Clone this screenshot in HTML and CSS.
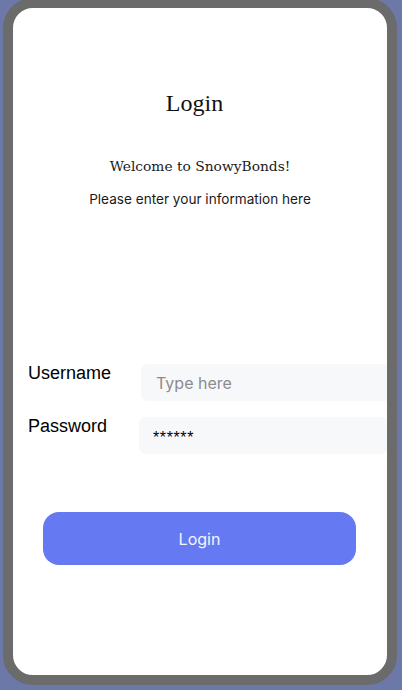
FILE: index.html
```html
<!DOCTYPE html>
<html>
<head>
<meta charset="utf-8">
<link rel="stylesheet" href="styles.css">
</head>
<body>
<div class="frame">
  <div class="screen">
    <header class="intro">
      <h1 class="title">Login</h1>
      <p class="welcome">Welcome to SnowyBonds!</p>
      <p class="hint">Please enter your information here</p>
    </header>
    <form class="form">
      <div class="row">
        <label class="label">Username</label>
        <div class="field field-user"><span class="placeholder">Type here</span></div>
      </div>
      <div class="row">
        <label class="label">Password</label>
        <div class="field field-pass"><span class="dots">******</span></div>
      </div>
      <button type="button" class="btn">Login</button>
    </form>
  </div>
</div>
</body>
</html>
```

FILE: styles.css
```css
html, body {
  margin: 0;
  padding: 0;
  height: 100%;
  background: #6c79a8;
  overflow: hidden;
}
.frame {
  margin: -2px 5px 0 3px;
  border: 10px solid #6b6b6b;
  border-radius: 30px;
  height: 667px;
  background: #ffffff;
  overflow: hidden;
}
.screen {
  height: 100%;
  display: flex;
  flex-direction: column;
}
.intro {
  display: flex;
  flex-direction: column;
  align-items: center;
  padding-top: 79px;
}
.title {
  margin: 0 0 0 -11px;
  font-family: "Liberation Serif", serif;
  font-weight: 400;
  font-size: 24px;
  line-height: 32px;
  color: #111;
}
.welcome {
  margin: 37px 0 0;
  font-family: "DejaVu Serif", serif;
  font-size: 13.8px;
  line-height: 20px;
  color: #1a1a1a;
}
.hint {
  margin: 13px 0 0;
  font-family: Inter, "Noto Sans", sans-serif;
  font-size: 13.6px;
  line-height: 20px;
  color: #1a1a1a;
}
.form {
  margin-top: 155px;
  display: flex;
  flex-direction: column;
}
.row {
  display: flex;
  align-items: flex-start;
  padding-left: 15px;
  margin-bottom: 16px;
}
.label {
  font-family: "Liberation Sans", Arial, sans-serif;
  font-size: 18px;
  line-height: 22px;
  color: #000;
  margin-top: -2px;
}
.field {
  flex: none;
  height: 37px;
  background: #f7f8fa;
  border-radius: 7px;
  display: flex;
  align-items: center;
  box-sizing: border-box;
}
.field-user {
  margin-left: 30px;
  width: 260px;
  padding-left: 15px;
}
.field-pass {
  margin-left: 32px;
  width: 249px;
  padding-left: 14px;
}
.placeholder {
  font-family: Inter, "Noto Sans", sans-serif;
  font-size: 16px;
  color: #8b8b90;
}
.dots {
  font-family: "Liberation Sans", Arial, sans-serif;
  font-size: 16px;
  letter-spacing: 0.6px;
  color: #000;
  padding-top: 5px;
}
.btn {
  margin: 42px 0 0 30px;
  width: 313px;
  height: 53px;
  border: none;
  border-radius: 16px;
  background: #6479f2;
  color: #f4f5ff;
  font-family: Inter, "Noto Sans", sans-serif;
  font-size: 16px;
  padding: 0;
}
```
